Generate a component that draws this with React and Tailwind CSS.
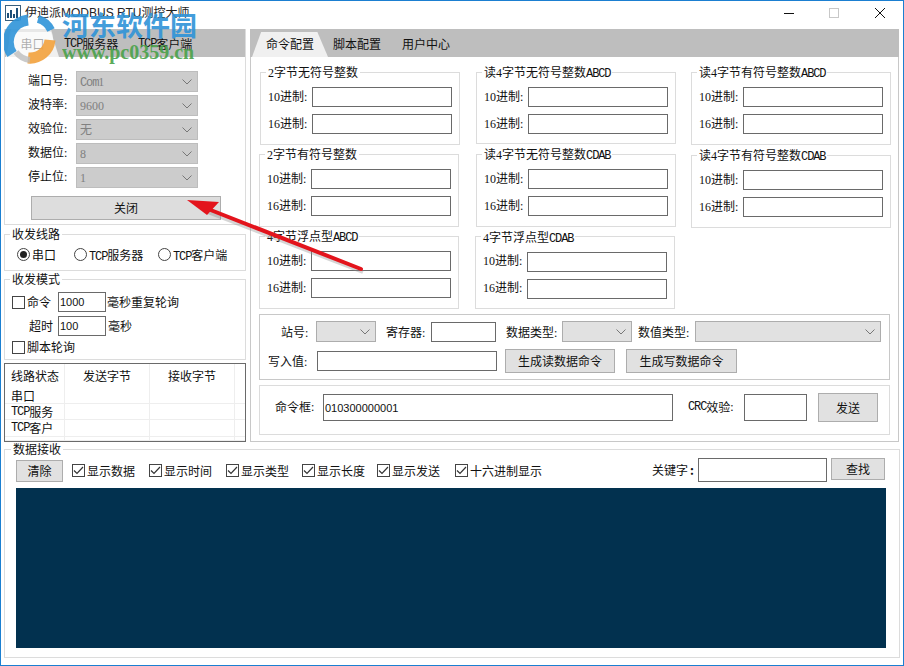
import React from "react";

const T = ({ t }) =>
  t.split(/([A-Za-z]+|[0-9:]+)/).map((p, i) =>
    /^[A-Za-z]+$/.test(p) ? (
      <span key={i} className="[font-family:'Liberation_Mono',monospace] text-[12px] leading-none tracking-[-1.1px]">{p}</span>
    ) : /^[0-9:]+$/.test(p) ? (
      <span key={i} className="[font-family:'Liberation_Serif',serif] text-[12px] leading-none">{p}</span>
    ) : (
      <span key={i}>{p}</span>
    )
  );

const Chevron = () => (
  <svg width="10" height="6" viewBox="0 0 10 6" className="shrink-0">
    <path d="M0.5 0.5 L5 5 L9.5 0.5" fill="none" stroke="#777" strokeWidth="1" />
  </svg>
);

const Select = ({ w, v, disabled }) => (
  <div className={`${w} h-[21px] flex items-center justify-between pl-[3px] pr-[5px] border ${disabled ? "bg-[#cccccc] border-[#bdbdbd] text-[#808080]" : "bg-[#e1e1e1] border-[#adadad]"}`}>
    <span className="pb-[2px]"><T t={v || ""} /></span>
    <Chevron />
  </div>
);

const Input = ({ w, h = "h-[20px]", v, extra = "" }) => (
  <div className={`${w} ${h} ${extra} border border-[#6a6a6a] bg-white flex items-center pl-[1px] text-[11px] [font-family:'Liberation_Sans',sans-serif] shrink-0`}>{v}</div>
);

const Btn = ({ w, h, t, extra = "" }) => (
  <div className={`${w} ${h} ${extra} bg-[#e1e1e1] border border-[#adadad] flex items-center justify-center shrink-0`}><T t={t} /></div>
);

const Check = ({ on }) => (
  <div className="w-[13px] h-[13px] border border-[#444] bg-white shrink-0 flex items-center justify-center">
    {on && (
      <svg width="11" height="9" viewBox="0 0 11 9">
        <path d="M1 4.5 L4 7.5 L10 1" fill="none" stroke="#333" strokeWidth="1.2" />
      </svg>
    )}
  </div>
);

const Radio = ({ on }) => (
  <div className="w-[13px] h-[13px] rounded-full border border-[#444] bg-white shrink-0 flex items-center justify-center">
    {on && <div className="w-[7px] h-[7px] rounded-full bg-[#222]" />}
  </div>
);

const Legend = ({ t, extra = "-ml-[2px]" }) => (
  <legend className={`${extra} px-[2px] h-[16px] leading-[16px] whitespace-nowrap`}><T t={t} /></legend>
);

const NumGroup = ({ t, extra = "" }) => (
  <fieldset className={`w-[200px] h-[81px] border border-[#dcdcdc] pl-[7px] pt-[7px] ${extra}`}>
    <Legend t={t} />
    <div className="flex items-center h-[20px]">
      <div className="w-[44px] pb-[3px] whitespace-nowrap"><T t="10进制:" /></div>
      <Input w="w-[140px]" />
    </div>
    <div className="flex items-center h-[20px] mt-[7px]">
      <div className="w-[44px] pb-[3px] whitespace-nowrap"><T t="16进制:" /></div>
      <Input w="w-[140px]" />
    </div>
  </fieldset>
);

const PortRow = ({ l, v }) => (
  <div className="flex items-center h-[21px]">
    <div className="w-[48px] pb-[3px]"><T t={l} /></div>
    <Select w="w-[122px]" v={v} disabled />
  </div>
);

const CheckLabel = ({ t, w, on }) => (
  <div className={`${w} flex items-center gap-[2px] shrink-0 pt-[1px]`}>
    <Check on={on} />
    <span><T t={t} /></span>
  </div>
);

export default function App() {
  return (
    <div className="relative w-[904px] h-[666px] overflow-hidden bg-white border border-[#1b7fd1] text-[12px] leading-[16px] text-[#111] [font-family:'Noto_Sans_CJK_SC','Liberation_Sans',sans-serif]">
      {/* title bar */}
      <div className="h-[28px] flex items-start pl-[4px]">
        <svg width="16" height="16" viewBox="0 0 16 16" className="shrink-0 mt-[4px]">
          <rect x="0.5" y="0.5" width="15" height="15" fill="#fff" stroke="#3a5f7d" />
          <path d="M3 13 V8 M6 13 V5 M9 13 V9 M12 13 V3" stroke="#1d4f78" strokeWidth="2" />
        </svg>
        <div className="ml-[4px] mt-[4px] text-[12px] text-[#222] [font-family:'Liberation_Sans','Noto_Sans_CJK_SC',sans-serif]">伊迪派MODBUS RTU测控大师</div>
        <div className="ml-auto mt-[6px] flex items-center">
          <svg width="12" height="12" viewBox="0 0 12 12" className="mr-[33px]">
            <path d="M1 6.5 H11" stroke="#111" strokeWidth="1" />
          </svg>
          <svg width="12" height="12" viewBox="0 0 12 12" className="mr-[34px]">
            <rect x="1.5" y="1.5" width="9" height="9" fill="none" stroke="#c8c8c8" />
          </svg>
          <svg width="12" height="12" viewBox="0 0 12 12" className="mr-[17px]">
            <path d="M1 1 L11 11 M11 1 L1 11" stroke="#111" strokeWidth="1" />
          </svg>
        </div>
      </div>

      {/* upper area */}
      <div className="flex pl-[3px]">
        {/* left column */}
        <div className="w-[242px] shrink-0 flex flex-col">
          <div className="h-[196px] border border-t-0 border-[#dcdcdc] flex flex-col">
            <div className="h-[28px] bg-[#bebebe] flex items-end pl-[1px]">
              <div className="w-[53px] h-[25px] bg-[#f0f0f0] [clip-path:polygon(10%_0,85%_0,100%_100%,0_100%)] flex items-center justify-center pb-[1px]">串口</div>
              <div className="ml-[5px] h-[25px] w-[54px] flex items-center whitespace-nowrap pb-[1px]"><T t="TCP服务器" /></div>
              <div className="ml-[20px] h-[25px] w-[54px] flex items-center whitespace-nowrap pb-[1px]"><T t="TCP客户端" /></div>
            </div>
            <div className="flex flex-col gap-[3px] pl-[23px] pt-[14px]">
              <PortRow l="端口号:" v="Com1" />
              <PortRow l="波特率:" v="9600" />
              <PortRow l="效验位:" v="无" />
              <PortRow l="数据位:" v="8" />
              <PortRow l="停止位:" v="1" />
              <Btn w="w-[190px]" h="h-[24px]" t="关闭" extra="ml-[3px] mt-[5px] !bg-[#dddddd]" />
            </div>
          </div>

          <fieldset className="h-[45px] mt-[1px] border border-[#dcdcdc] pl-[12px]">
            <Legend t="收发线路" extra="-ml-[7px]" />
            <div className="flex items-center h-[23px] mt-[1px]">
              <div className="w-[57px] flex items-center gap-[2px]"><Radio on /><span>串口</span></div>
              <div className="w-[84px] flex items-center gap-[2px]"><Radio /><span className="whitespace-nowrap"><T t="TCP服务器" /></span></div>
              <div className="flex items-center gap-[2px]"><Radio /><span className="whitespace-nowrap"><T t="TCP客户端" /></span></div>
            </div>
          </fieldset>

          <fieldset className="h-[89px] border border-[#dcdcdc] pl-[7px]">
            <Legend t="收发模式" />
            <div className="flex items-center h-[20px] mt-[5px]">
              <Check />
              <span className="ml-[2px] w-[31px]">命令</span>
              <Input w="w-[48px]" v="1000" />
              <span className="ml-[1px]">毫秒重复轮询</span>
            </div>
            <div className="flex items-center h-[20px] mt-[4px]">
              <span className="ml-[17px] w-[29px]">超时</span>
              <Input w="w-[48px]" v="100" />
              <span className="ml-[2px]">毫秒</span>
            </div>
            <div className="flex items-center h-[20px] mt-[1px]">
              <Check />
              <span className="ml-[2px]">脚本轮询</span>
            </div>
          </fieldset>

          <div className="mt-[3px] h-[79px] border border-[#6a6a6a] overflow-hidden">
            <div className="grid grid-cols-[60px_85px_85px_10px] grid-rows-[24px_16px_16px_17px_4px]">
              <div className="pl-[6px] flex items-center border-r border-[#eeeeee]">线路状态</div>
              <div className="flex items-center justify-center border-r border-[#eeeeee]">发送字节</div>
              <div className="flex items-center justify-center border-r border-[#eeeeee]">接收字节</div>
              <div />
              {[["串口"], ["TCP服务"], ["TCP客户"], [""]].map(([l], i) => (
                <React.Fragment key={i}>
                  <div className="pl-[6px] flex items-center border-r border-b border-[#eeeeee] whitespace-nowrap"><T t={l} /></div>
                  <div className="border-r border-b border-[#eeeeee]" />
                  <div className="border-r border-b border-[#eeeeee]" />
                  <div className="border-b border-[#eeeeee]" />
                </React.Fragment>
              ))}
            </div>
          </div>
        </div>

        {/* right panel */}
        <div className="ml-[4px] w-[649px] h-[413px] border border-t-0 border-[#c8c8c8] flex flex-col">
          <div className="h-[28px] bg-[#bebebe] flex items-end pl-[1px] -ml-[1px] -mr-[1px] shrink-0">
            <div className="ml-[1px] w-[76px] h-[25px] bg-[#f0f0f0] [clip-path:polygon(12%_0,86%_0,100%_100%,0_100%)] flex items-center justify-center pb-[1px]">命令配置</div>
            <div className="ml-[5px] h-[25px] flex items-center pb-[1px]">脚本配置</div>
            <div className="ml-[21px] h-[25px] flex items-center pb-[1px]">用户中心</div>
          </div>
          <div className="flex pt-[7px] h-[252px] shrink-0">
            <div className="flex flex-col gap-[1px] ml-[8px]">
              <NumGroup t="2字节无符号整数" extra="ml-[1px]" />
              <NumGroup t="2字节有符号整数" />
              <NumGroup t="4字节浮点型ABCD" />
            </div>
            <div className="flex flex-col gap-[2px] ml-[15px]">
              <NumGroup t="读4字节无符号整数ABCD" extra="ml-[1px]" />
              <NumGroup t="读4字节无符号整数CDAB" extra="ml-[1px]" />
              <NumGroup t="4字节浮点型CDAB" />
            </div>
            <div className="flex flex-col gap-[2px] ml-[15px]">
              <NumGroup t="读4字节有符号整数ABCD" />
              <NumGroup t="读4字节有符号整数CDAB" />
            </div>
          </div>

          <div className="ml-[8px] mt-[5px] w-[631px] h-[66px] border border-[#c8c8c8] shrink-0 pt-[6px]">
            <div className="flex items-center h-[21px] pl-[21px]">
              <div className="w-[35px]"><T t="站号:" /></div>
              <Select w="w-[60px]" />
              <div className="ml-[10px] w-[45px]"><T t="寄存器:" /></div>
              <Input w="w-[65px]" />
              <div className="ml-[10px] w-[56px]"><T t="数据类型:" /></div>
              <Select w="w-[70px]" />
              <div className="ml-[6px] w-[57px]"><T t="数值类型:" /></div>
              <Select w="w-[186px]" />
            </div>
            <div className="flex items-center h-[24px] mt-[7px] pl-[8px]">
              <div className="w-[49px]"><T t="写入值:" /></div>
              <Input w="w-[180px]" />
              <Btn w="w-[110px]" h="h-[24px]" t="生成读数据命令" extra="ml-[8px]" />
              <Btn w="w-[111px]" h="h-[24px]" t="生成写数据命令" extra="ml-[11px]" />
            </div>
          </div>

          <div className="ml-[8px] mt-[5px] w-[631px] h-[50px] border border-[#dcdcdc] shrink-0 pt-[7px] pl-[15px] flex items-start">
            <div className="w-[48px] h-[27px] flex items-center"><T t="命令框:" /></div>
            <Input w="w-[350px]" h="h-[27px]" v="010300000001" extra="mt-[1px]" />
            <div className="ml-[15px] w-[56px] h-[27px] flex items-center whitespace-nowrap"><T t="CRC效验:" /></div>
            <Input w="w-[63px]" h="h-[27px]" extra="mt-[1px]" />
            <Btn w="w-[60px]" h="h-[29px]" t="发送" extra="ml-[11px]" />
          </div>
        </div>
      </div>

      {/* data receive */}
      <fieldset className="ml-[3px] -mt-[1px] w-[896px] h-[217px] border border-[#dcdcdc] pl-[11px]">
        <Legend t="数据接收" extra="-ml-[5px]" />
        <div className="flex items-center h-[24px] mt-[1px] w-[870px]">
          <Btn w="w-[47px]" h="h-[22px]" t="清除" extra="mt-[2px] mr-[9px]" />
          <CheckLabel t="显示数据" w="w-[77px]" on />
          <CheckLabel t="显示时间" w="w-[77px]" on />
          <CheckLabel t="显示类型" w="w-[76px]" on />
          <CheckLabel t="显示长度" w="w-[75px]" on />
          <CheckLabel t="显示发送" w="w-[78px]" on />
          <CheckLabel t="十六进制显示" w="w-[90px]" on />
          <div className="ml-auto mr-[1px] flex items-center">
            <span className="mr-[4px] whitespace-nowrap">关键字<span className="ml-[2px] font-bold">:</span></span>
            <Input w="w-[129px]" h="h-[24px]" />
            <Btn w="w-[54px]" h="h-[22px]" t="查找" extra="ml-[4px] -mt-[2px]" />
          </div>
        </div>
        <div className="mt-[6px] w-[870px] h-[160px] bg-[#02314f]" />
      </fieldset>

      {/* watermark over the window */}
      <svg width="56" height="52" viewBox="0 0 56 52" className="absolute left-[3px] top-[13px] pointer-events-none">
        <circle cx="27" cy="25" r="22" fill="#ffffff" opacity="0.65" />
        <path d="M8 40 A22 22 0 0 1 24 6" fill="none" stroke="#2f93d8" strokeWidth="11" opacity="0.9" />
        <path d="M34 5 A20 20 0 0 1 47 16" fill="none" stroke="#2f93d8" strokeWidth="8" opacity="0.9" />
        <path d="M46 26 A20 20 0 0 1 24 44" fill="none" stroke="#f2a13c" strokeWidth="11" opacity="0.9" />
        <path d="M12 38 A20 20 0 0 0 26 46" fill="none" stroke="#bdbdbd" strokeWidth="6" opacity="0.8" />
      </svg>
      <div className="absolute left-[61px] top-[6px] text-[27px] leading-[36px] font-bold text-[#2f93d8] opacity-90 whitespace-nowrap pointer-events-none">河东软件园</div>
      <div className="absolute left-[61px] top-[40px] text-[20px] leading-[22px] font-bold text-[#4aa24a] opacity-90 whitespace-nowrap pointer-events-none [font-family:'Liberation_Serif',serif]">www.pc0359.cn</div>

      {/* red arrow annotation */}
      <svg width="904" height="666" viewBox="0 0 904 666" className="absolute -left-[1px] -top-[1px] pointer-events-none">
        <path d="M363 272 L205 211" stroke="#8a8a8a" strokeWidth="4" opacity="0.35" />
        <path d="M361 269 L203 207" stroke="#e3141c" strokeWidth="4" strokeLinecap="round" />
        <path d="M187 200 L219 202 L207 215 Z" fill="#e3141c" />
      </svg>
    </div>
  );
}
